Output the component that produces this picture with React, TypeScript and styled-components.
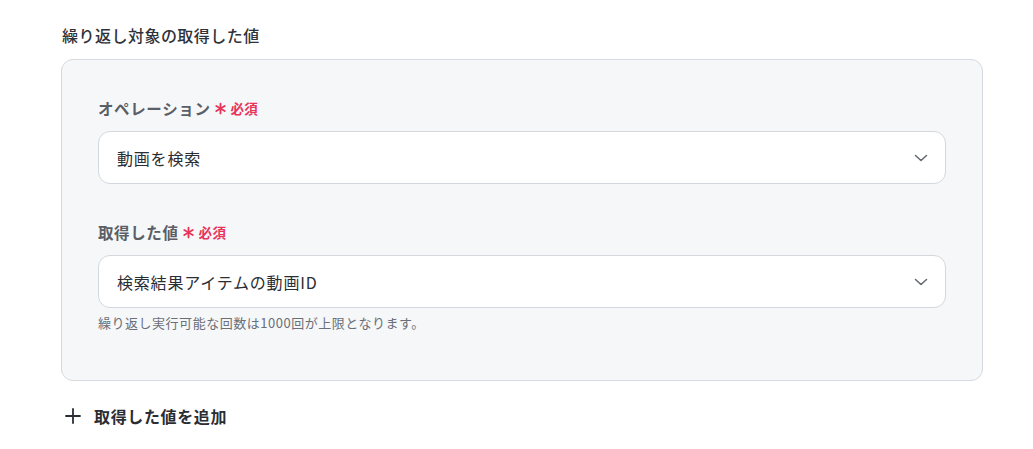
import React from "react";
import styled, { createGlobalStyle } from "styled-components";

const GlobalStyle = createGlobalStyle`
  html, body {
    margin: 0;
    padding: 0;
    background: #ffffff;
    font-family: "Noto Sans CJK JP", "Noto Sans", sans-serif;
    color: #2a2d33;
  }
`;

const Page = styled.div`
  padding: 23px 50px 0 61px;
  width: 922px;
`;

const Title = styled.h2`
  margin: 0 0 12px 1px;
  font-size: 16px;
  line-height: 24px;
  font-weight: 500;
  letter-spacing: 0.03em;
  color: #2f3238;
`;

const Panel = styled.div`
  border: 1px solid #d5d9e0;
  border-radius: 12px;
  background: #f6f7f9;
  padding: 37px 36px 48px 36px;
  display: flex;
  flex-direction: column;
`;

const Field = styled.div<{ $gap?: number }>`
  display: flex;
  flex-direction: column;
  margin-bottom: ${(p) => p.$gap ?? 0}px;
`;

const Label = styled.div`
  display: flex;
  align-items: center;
  font-size: 15.5px;
  line-height: 22px;
  font-weight: 600;
  letter-spacing: 0.04em;
  color: #5a5e66;
  margin-bottom: 12px;
`;

const Required = styled.span`
  display: inline-flex;
  align-items: center;
  margin-left: 3px;
  color: #e8345a;
  font-size: 13.5px;
  font-weight: 600;
  letter-spacing: 0.02em;
  gap: 4px;
`;

const Select = styled.div`
  height: 51px;
  border: 1px solid #d3d7de;
  border-radius: 12px;
  background: #ffffff;
  display: flex;
  align-items: center;
  justify-content: space-between;
  padding: 0 17px 0 18px;
  font-size: 16px;
  letter-spacing: 0.05em;
  color: #2a2d33;
`;

const Help = styled.div`
  margin-top: 6px;
  font-size: 13px;
  line-height: 18px;
  letter-spacing: 0.04em;
  color: #6b6f77;
`;

const AddButton = styled.button`
  margin: 23px 0 0 4px;
  padding: 0;
  border: none;
  background: none;
  display: flex;
  align-items: center;
  gap: 13px;
  font-family: inherit;
  font-size: 16px;
  line-height: 24px;
  font-weight: 600;
  letter-spacing: 0.04em;
  color: #2a2d33;
  cursor: pointer;
`;

const Chevron = () => (
  <svg width="14" height="14" viewBox="0 0 14 14" fill="none">
    <path d="M1.5 4.5 L7 9.5 L12.5 4.5" stroke="#666a72" strokeWidth="1.6" strokeLinecap="round" strokeLinejoin="round" />
  </svg>
);

const Asterisk = () => (
  <svg width="13" height="13" viewBox="0 0 12 12" fill="none">
    <g stroke="#e8345a" strokeWidth="1.7" strokeLinecap="round">
      <path d="M6 1.5 V10.5" />
      <path d="M2.1 3.75 L9.9 8.25" />
      <path d="M2.1 8.25 L9.9 3.75" />
    </g>
  </svg>
);

const Plus = () => (
  <svg width="16" height="16" viewBox="0 0 16 16" fill="none">
    <path d="M8 1 V15 M1 8 H15" stroke="#2a2d33" strokeWidth="1.8" strokeLinecap="round" />
  </svg>
);

export default function App() {
  return (
    <Page>
      <GlobalStyle />
      <Title>繰り返し対象の取得した値</Title>
      <Panel>
        <Field $gap={37}>
          <Label>
            オペレーション
            <Required>
              <Asterisk />
              必須
            </Required>
          </Label>
          <Select>
            <span>動画を検索</span>
            <Chevron />
          </Select>
        </Field>
        <Field>
          <Label>
            取得した値
            <Required>
              <Asterisk />
              必須
            </Required>
          </Label>
          <Select>
            <span>検索結果アイテムの動画ID</span>
            <Chevron />
          </Select>
          <Help>繰り返し実行可能な回数は1000回が上限となります。</Help>
        </Field>
      </Panel>
      <AddButton>
        <Plus />
        取得した値を追加
      </AddButton>
    </Page>
  );
}
